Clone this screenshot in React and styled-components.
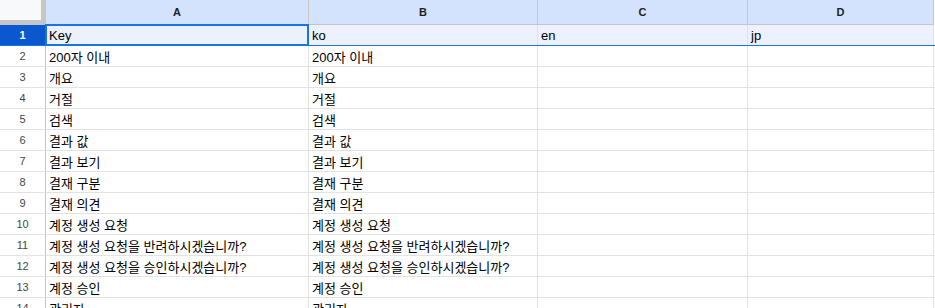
import React from "react";
import styled, { createGlobalStyle } from "styled-components";

const COLS = "46px 263px 229px 210px 186px 1fr";

const rows = [
  ["Key", "ko", "en", "jp"],
  ["200자 이내", "200자 이내"],
  ["개요", "개요"],
  ["거절", "거절"],
  ["검색", "검색"],
  ["결과 값", "결과 값"],
  ["결과 보기", "결과 보기"],
  ["결재 구분", "결재 구분"],
  ["결재 의견", "결재 의견"],
  ["계정 생성 요청", "계정 생성 요청"],
  ["계정 생성 요청을 반려하시겠습니까?", "계정 생성 요청을 반려하시겠습니까?"],
  ["계정 생성 요청을 승인하시겠습니까?", "계정 생성 요청을 승인하시겠습니까?"],
  ["계정 승인", "계정 승인"],
  ["관리자", "관리자"],
];

const App = () => {
  return (
    <>
      <GlobalStyle />
      <Sheet>
        <HeaderRow>
          <Corner />
          {["A", "B", "C", "D"].map((c) => (
            <ColHead key={c}>{c}</ColHead>
          ))}
          <Filler />
        </HeaderRow>
        {rows.map((r, i) => {
          const selected = i === 0;
          return (
            <Row key={i} $selected={selected}>
              <RowHead $selected={selected}>{i + 1}</RowHead>
              {[0, 1, 2, 3].map((c) => (
                <Cell key={c} $selected={selected}>
                  {r[c] || ""}
                  {selected && c === 0 && <Selection />}
                </Cell>
              ))}
              <Filler />
            </Row>
          );
        })}
      </Sheet>
    </>
  );
};

const GlobalStyle = createGlobalStyle`
  html, body {
    margin: 0;
    padding: 0;
    background: #fff;
    overflow: hidden;
  }
  body {
    font-family: "Liberation Sans", Arial, "Noto Sans CJK KR", sans-serif;
  }
`;

const Sheet = styled.div`
  width: 935px;
  height: 308px;
  overflow: hidden;
  display: flex;
  flex-direction: column;
`;

const HeaderRow = styled.div`
  display: grid;
  grid-template-columns: ${COLS};
  height: 25px;
  flex: none;
`;

const Corner = styled.div`
  box-sizing: border-box;
  background: #f8f9fa;
  border-right: 5px solid #c4c7c5;
  border-bottom: 5px solid #c4c7c5;
`;

const ColHead = styled.div`
  box-sizing: border-box;
  background: #d3e3fd;
  border-right: 1px solid #c4c7c5;
  border-bottom: 1px solid #c4c7c5;
  display: flex;
  align-items: center;
  justify-content: center;
  font-size: 11px;
  font-weight: 700;
  color: #1f1f1f;
`;

const Filler = styled.div`
  background: #fff;
`;

const Row = styled.div`
  display: grid;
  grid-template-columns: ${COLS};
  height: 21px;
  flex: none;
  box-sizing: border-box;
  border-bottom: 1px solid ${(p) => (p.$selected ? "#1a73e8" : "#e2e2e2")};
`;

const RowHead = styled.div`
  box-sizing: border-box;
  border-right: 1px solid #c4c7c5;
  display: flex;
  align-items: center;
  justify-content: center;
  font-size: 11px;
  background: ${(p) => (p.$selected ? "#0b57d0" : "#fff")};
  color: ${(p) => (p.$selected ? "#fff" : "#444746")};
  font-weight: ${(p) => (p.$selected ? 700 : 400)};
`;

const Cell = styled.div`
  position: relative;
  box-sizing: border-box;
  border-right: 1px solid #e2e2e2;
  background: ${(p) => (p.$selected ? "#ebf1fd" : "#fff")};
  padding: 0 3px;
  display: flex;
  align-items: center;
  font-size: 13px;
  color: #000;
  white-space: nowrap;
  overflow: visible;
`;

const Selection = styled.div`
  position: absolute;
  left: -1px;
  top: -1px;
  right: -1px;
  bottom: -1px;
  border: 2px solid #1a73e8;
  pointer-events: none;
`;

export default App;
